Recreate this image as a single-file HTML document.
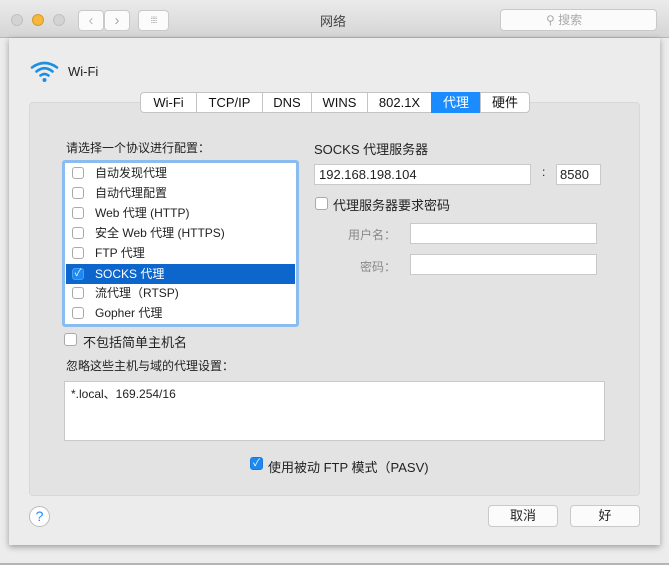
<!DOCTYPE html><html><head><meta charset="utf-8"><style>
*{box-sizing:border-box;margin:0;padding:0}
body{width:669px;height:565px;position:relative;overflow:hidden;background:#ececec;font-family:"Liberation Sans","Noto Sans CJK SC",sans-serif;font-size:12px;color:#222}
.a{position:absolute;white-space:nowrap}
.tb{left:0;top:0;width:669px;height:38px;background:linear-gradient(#ebebeb,#d5d5d5);border-bottom:1px solid #b7b7b7}
.dot{width:12px;height:12px;border-radius:50%;background:#d3d3d3;border:1px solid #c0c0c0;top:14px}
.btn{background:#fbfbfb;border:1px solid #c9c9c9;border-radius:4px}
.sheet{left:9px;top:38px;width:651px;height:507px;background:#ececec;box-shadow:0 2px 6px rgba(0,0,0,.35)}
.grp{left:29px;top:102px;width:611px;height:394px;background:#e3e3e3;border:1px solid #d8d8d8;border-radius:4px}
.tab{top:92px;height:21px;line-height:20px;text-align:center;background:#fff;border:1px solid #c4c4c4;font-size:13px;color:#111}
.cb{width:12px;height:12px;border:1px solid #a9a9a9;border-radius:3px;background:#fff}
.field{background:#fff;border:1px solid #c9c9c9}
.row{left:66px;width:229px;height:20px;line-height:20px}
.row .cb{position:absolute;left:6px;top:4px}
.row span{position:absolute;left:29px}
</style></head><body>
<div class="a tb"></div>
<div class="a dot" style="left:11px"></div>
<div class="a dot" style="left:32px;background:#f5b83d;border-color:#d99a26"></div>
<div class="a dot" style="left:53px"></div>
<div class="a btn" style="left:78px;top:10px;width:26px;height:21px;color:#bbb;text-align:center;line-height:19px;font-size:15px">&#8249;</div>
<div class="a btn" style="left:104px;top:10px;width:26px;height:21px;color:#aaa;text-align:center;line-height:19px;font-size:15px">&#8250;</div>
<div class="a btn" style="left:138px;top:10px;width:31px;height:21px;color:#aaa;text-align:center;line-height:18px;font-size:9px;letter-spacing:-1px">⁞⁞⁞⁞</div>
<div class="a" style="left:320px;top:11px;font-size:13px;color:#444">网络</div>
<div class="a btn" style="left:500px;top:9px;width:157px;height:22px;color:#aaa;font-size:12px;line-height:20px;padding-left:45px"><span style="font-size:12px">&#9906;</span> 搜索</div>
<div class="a sheet"></div>
<svg class="a" style="left:29px;top:59px" width="32" height="25" viewBox="0 0 32 25"><g fill="none" stroke="#1d8fe0" stroke-width="2.6" stroke-linecap="round"><path d="M3 8.5 Q15.5 -0.5 28 8.5"/><path d="M7.5 12.5 Q15.5 6 23.5 12.5"/><path d="M11.5 16.5 Q15.5 13.5 19.5 16.5"/></g><circle cx="15.5" cy="21" r="2" fill="#1d8fe0"/></svg>
<div class="a" style="left:68px;top:64px;font-size:13px">Wi-Fi</div>
<div class="a grp"></div>
<div class="a tab" style="left:140px;width:57px;border-radius:4px 0 0 4px">Wi-Fi</div>
<div class="a tab" style="left:196px;width:67px">TCP/IP</div>
<div class="a tab" style="left:262px;width:50px">DNS</div>
<div class="a tab" style="left:311px;width:57px">WINS</div>
<div class="a tab" style="left:367px;width:65px">802.1X</div>
<div class="a tab" style="left:431px;width:50px;background:#1a8cff;border-color:#1a8cff;color:#fff">代理</div>
<div class="a tab" style="left:480px;width:50px;border-radius:0 4px 4px 0">硬件</div>
<div class="a" style="left:66px;top:139px">请选择一个协议进行配置：</div>
<div class="a" style="left:62px;top:160px;width:237px;height:167px;border:3px solid #8bbcef;border-radius:3px;background:#fff"></div>
<div class="a row" style="top:163px"><div class="cb"></div><span>自动发现代理</span></div>
<div class="a row" style="top:183px"><div class="cb"></div><span>自动代理配置</span></div>
<div class="a row" style="top:203px"><div class="cb"></div><span>Web 代理 (HTTP)</span></div>
<div class="a row" style="top:223px"><div class="cb"></div><span>安全 Web 代理 (HTTPS)</span></div>
<div class="a row" style="top:243px"><div class="cb"></div><span>FTP 代理</span></div>
<div class="a row" style="top:264px;background:#0d66cc;color:#fff"><div class="cb" style="background:#1d88f0;border-color:#4aa0f5;color:#fff;font-size:10px;line-height:10px;text-align:center">✓</div><span>SOCKS 代理</span></div>
<div class="a row" style="top:283px"><div class="cb"></div><span>流代理（RTSP)</span></div>
<div class="a row" style="top:303px"><div class="cb"></div><span>Gopher 代理</span></div>
<div class="a cb" style="left:64px;top:333px;width:13px;height:13px"></div>
<div class="a" style="left:83px;top:332px;font-size:13px">不包括简单主机名</div>
<div class="a" style="left:66px;top:357px">忽略这些主机与域的代理设置：</div>
<div class="a field" style="left:64px;top:381px;width:541px;height:60px;padding:3px 6px">*.local、169.254/16</div>
<div class="a cb" style="left:250px;top:457px;width:13px;height:13px;background:#1d88f0;border-color:#1a7ad8;color:#fff;font-size:10px;line-height:11px;text-align:center">✓</div>
<div class="a" style="left:268px;top:457px;font-size:13px">使用被动 FTP 模式（PASV)</div>
<div class="a" style="left:314px;top:139px;font-size:13px">SOCKS 代理服务器</div>
<div class="a field" style="left:314px;top:164px;width:217px;height:21px;font-size:13px;line-height:19px;padding-left:4px">192.168.198.104</div>
<div class="a" style="left:542px;top:165px;font-size:12px">:</div>
<div class="a field" style="left:556px;top:164px;width:45px;height:21px;font-size:13px;line-height:19px;padding-left:3px">8580</div>
<div class="a cb" style="left:315px;top:197px;width:13px;height:13px"></div>
<div class="a" style="left:333px;top:195px;font-size:13px">代理服务器要求密码</div>
<div class="a" style="left:348px;top:226px;color:#888">用户名：</div>
<div class="a field" style="left:410px;top:223px;width:187px;height:21px"></div>
<div class="a" style="left:360px;top:258px;color:#888">密码：</div>
<div class="a field" style="left:410px;top:254px;width:187px;height:21px"></div>
<div class="a" style="left:29px;top:506px;width:21px;height:21px;border-radius:50%;background:#fff;border:1px solid #bbb;color:#1a8cff;text-align:center;line-height:19px;font-size:14px">?</div>
<div class="a btn" style="left:488px;top:505px;width:70px;height:22px;text-align:center;line-height:20px;font-size:13px">取消</div>
<div class="a btn" style="left:570px;top:505px;width:70px;height:22px;text-align:center;line-height:20px;font-size:13px">好</div>
<div class="a" style="left:0;top:563px;width:669px;height:2px;background:#b5b5b5"></div>
</body></html>
